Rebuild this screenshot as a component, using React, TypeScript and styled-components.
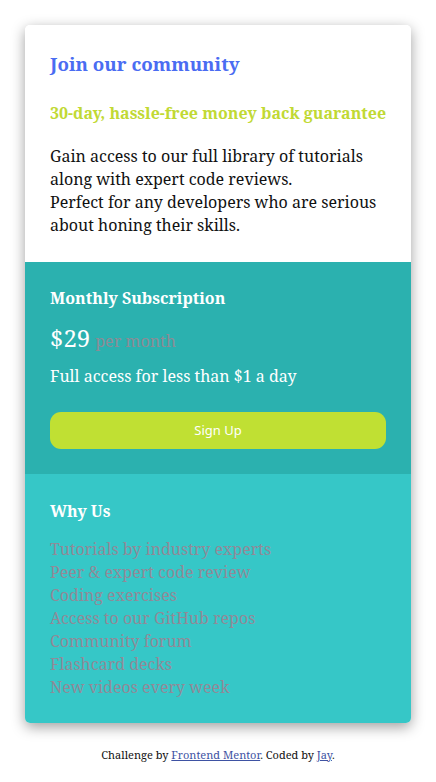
import React from 'react'
import styled, { createGlobalStyle } from 'styled-components'

const GlobalStyle = createGlobalStyle`
  body {
    margin: 0;
    background: #ffffff;
    font-family: 'Noto Serif', 'DejaVu Serif', serif;
  }
`

const Page = styled.main`
  padding: 25px 25px 0;
`

const Card = styled.div`
  border-radius: 5px;
  overflow: hidden;
  box-shadow: 0 4px 14px rgba(0, 0, 0, 0.38);
`

const Section = styled.section<{ $bg: string; $top: number; $bottom: number }>`
  background: ${p => p.$bg};
  padding: ${p => p.$top}px 25px ${p => p.$bottom}px;
`

const Title = styled.h1`
  margin: 0;
  font-size: 18.72px;
  line-height: 24px;
  font-weight: 700;
  color: #4a6cf2;
`

const Guarantee = styled.h2`
  margin: 26px 0 0;
  font-size: 16px;
  line-height: 23px;
  font-weight: 700;
  color: #c1d934;
  white-space: nowrap;
`

const Text = styled.p<{ $gap?: number; $color?: string }>`
  margin: ${p => p.$gap ?? 0}px 0 0;
  font-size: 16px;
  line-height: 23px;
  color: ${p => p.$color ?? '#111111'};
`

const SubTitle = styled.h3`
  margin: 0;
  font-size: 16px;
  line-height: 23px;
  font-weight: 700;
  color: #ffffff;
`

const Price = styled.div`
  margin-top: 12.5px;
  display: flex;
  align-items: baseline;
  gap: 5px;
  line-height: 30px;
`

const Amount = styled.span`
  font-size: 24px;
  color: #ffffff;
`

const Period = styled.span`
  font-size: 16px;
  color: #8b8c95;
`

const SignUp = styled.button`
  display: block;
  width: 100%;
  height: 37px;
  margin-top: 23.5px;
  border: none;
  border-radius: 11px;
  background: #c0e033;
  color: #ffffff;
  font-family: 'Noto Sans', sans-serif;
  font-size: 13px;
  cursor: pointer;
`

const List = styled.ul`
  list-style: none;
  margin: 15px 0 0;
  padding: 0;
`

const Item = styled.li`
  font-size: 16px;
  line-height: 23px;
  color: #918a97;
`

const Footer = styled.footer`
  padding: 24px 0 0;
  text-align: center;
  font-size: 11px;
  line-height: 15px;
  color: #111111;

  a {
    color: #3e52a3;
  }
`

const reasons = [
  'Tutorials by industry experts',
  'Peer & expert code review',
  'Coding exercises',
  'Access to our GitHub repos',
  'Community forum',
  'Flashcard decks',
  'New videos every week',
]

const App: React.FC = () => {
  return (
    <Page>
      <GlobalStyle />
      <Card>
        <Section $bg='#ffffff' $top={27} $bottom={24.5}>
          <Title>Join our community</Title>
          <Guarantee>30-day, hassle-free money back guarantee</Guarantee>
          <Text $gap={20}>
            Gain access to our full library of tutorials along with expert code reviews.
            <br />
            Perfect for any developers who are serious about honing their skills.
          </Text>
        </Section>
        <Section $bg='#2bb1af' $top={25.5} $bottom={25}>
          <SubTitle>Monthly Subscription</SubTitle>
          <Price>
            <Amount>$29</Amount>
            <Period>per month</Period>
          </Price>
          <Text $gap={9.5} $color='#ffffff'>
            Full access for less than $1 a day
          </Text>
          <SignUp>Sign Up</SignUp>
        </Section>
        <Section $bg='#36c7c7' $top={26.5} $bottom={23.5}>
          <SubTitle>Why Us</SubTitle>
          <List>
            {reasons.map(r => (
              <Item key={r}>{r}</Item>
            ))}
          </List>
        </Section>
      </Card>
      <Footer>
        Challenge by <a href='#'>Frontend Mentor</a>. Coded by <a href='#'>Jay</a>.
      </Footer>
    </Page>
  )
}

export default App
